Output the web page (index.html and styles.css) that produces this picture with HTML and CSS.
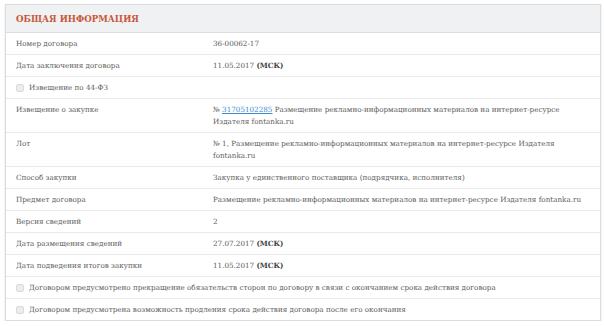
FILE: index.html
```html
<!DOCTYPE html>
<html lang="ru">
<head>
<meta charset="utf-8">
<link rel="stylesheet" href="styles.css">
</head>
<body>
<div class="card">
  <div class="card-head">ОБЩАЯ ИНФОРМАЦИЯ</div>
  <div class="row"><div class="label">Номер договора</div><div class="value">36-00062-17</div></div>
  <div class="row"><div class="label">Дата заключения договора</div><div class="value">11.05.2017 <b>(МСК)</b></div></div>
  <div class="row full"><span class="check"></span>Извещение по 44-ФЗ</div>
  <div class="row"><div class="label">Извещение о закупке</div><div class="value">№ <a href="#">31705102285</a> Размещение рекламно-информационных материалов на интернет-ресурсе Издателя fontanka.ru</div></div>
  <div class="row"><div class="label">Лот</div><div class="value">№ 1, Размещение рекламно-информационных материалов на интернет-ресурсе Издателя fontanka.ru</div></div>
  <div class="row"><div class="label">Способ закупки</div><div class="value">Закупка у единственного поставщика (подрядчика, исполнителя)</div></div>
  <div class="row"><div class="label">Предмет договора</div><div class="value">Размещение рекламно-информационных материалов на интернет-ресурсе Издателя fontanka.ru</div></div>
  <div class="row"><div class="label">Версия сведений</div><div class="value">2</div></div>
  <div class="row"><div class="label">Дата размещения сведений</div><div class="value">27.07.2017 <b>(МСК)</b></div></div>
  <div class="row"><div class="label">Дата подведения итогов закупки</div><div class="value">11.05.2017 <b>(МСК)</b></div></div>
  <div class="row full"><span class="check"></span>Договором предусмотрено прекращение обязательств сторон по договору в связи с окончанием срока действия договора</div>
  <div class="row full"><span class="check"></span>Договором предусмотрена возможность продления срока действия договора после его окончания</div>
</div>
</body>
</html>
```
FILE: styles.css
```css
* { box-sizing: border-box; }
body {
  margin: 0;
  background: #ffffff;
  font-family: "DejaVu Serif", "Liberation Serif", serif;
  font-size: 7.2px;
  color: #5a5a5a;
}
.card {
  margin: 4px 3px 0 5px;
  border: 1px solid #dcdcdc;
  box-shadow: 0 1px 2px rgba(0,0,0,0.12);
  background: #fff;
}
.card-head {
  height: 28px;
  background: #f0f1f3;
  border-bottom: 1px solid #dedede;
  display: flex;
  align-items: center;
  padding-left: 10px;
  color: #c7583a;
  font-family: "DejaVu Serif Condensed", "DejaVu Serif", serif;
  font-stretch: condensed;
  font-weight: bold;
  font-size: 9.6px;
}
.row {
  display: grid;
  grid-template-columns: 197px 1fr;
  padding: 5px 10px 4px 10px;
  line-height: 12px;
  border-top: 1px solid #e9e9e9;
}
.card-head + .row { border-top: none; }
.row.full {
  display: flex;
  align-items: center;
}
.value { padding-right: 6px; }
.value b { color: #444; font-weight: bold; }
.value a { color: #3a8bd0; text-decoration: underline; }
.check {
  width: 8px;
  height: 8px;
  background: #ececec;
  border: 1px solid #dadada;
  border-radius: 2px;
  margin-right: 5px;
  flex: none;
}
```
